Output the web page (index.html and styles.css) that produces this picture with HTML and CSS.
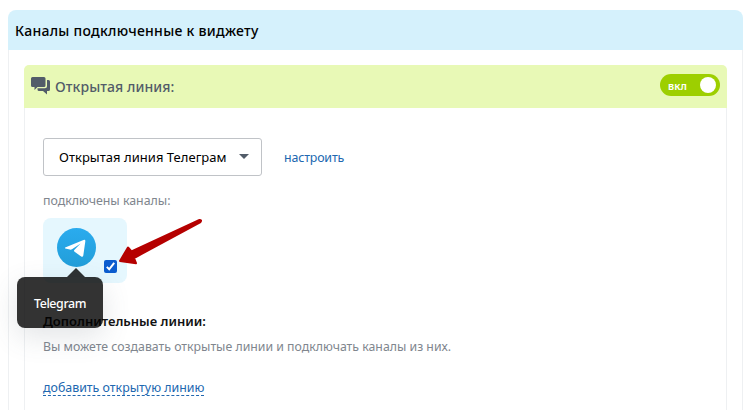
FILE: index.html
```html
<!DOCTYPE html>
<html lang="ru">
<head>
<meta charset="utf-8">
<title>Каналы</title>
<link rel="stylesheet" href="styles.css">
</head>
<body>
<section class="panel">
  <header class="panel-head"><span class="panel-title">Каналы подключенные к виджету</span></header>
  <div class="panel-body">
    <section class="line">
      <header class="line-head">
        <svg class="chat" viewBox="0 0 20 18" width="20" height="18"><path d="M1.500 0H13Q14.500 0 14.500 1.500V8.500Q14.500 10 13 10H6.500L3.500 13V10H1.500Q0 10 0 8.500V1.500Q0 0 1.500 0Z"/><path d="M16 3H17.500Q19 3 19 4.500V12.500Q19 14 17.500 14H16V17.500L12 14H8Q6.500 14 6.500 12.500V11.300H14Q16 11.300 16 9.300Z"/></svg>
        <span class="line-title">Открытая линия:</span>
        <div class="toggle"><span class="toggle-text">вкл</span><span class="knob"></span></div>
      </header>
      <div class="line-body">
        <div class="row">
          <div class="select"><span class="select-text">Открытая линия Телеграм</span><span class="caret"></span></div>
          <a class="link setup">настроить</a>
        </div>
        <div class="label"><span class="label-text">подключены каналы:</span></div>
        <div class="channel">
          <svg class="telegram" viewBox="0 0 39 39" width="39" height="39"><defs><linearGradient id="tg" x1="0" y1="0" x2="0" y2="1"><stop offset="0" stop-color="#2aabee"/><stop offset="1" stop-color="#229ed9"/></linearGradient></defs><circle cx="19.500" cy="19.500" r="19.500" fill="url(#tg)"/><path fill="#fff" d="M8.200 19.500L26.500 12Q28.600 11.300 28.300 13.400L26.300 27.600Q25.800 29.500 24.200 28.500L17.600 23.800Q16.400 22.800 17.500 21.700L23.600 15.600L15 21.300Q14 21.900 12.800 21.600L8.300 20.400Q7.600 20 8.200 19.500Z"/></svg>
          <span class="check"><svg viewBox="0 0 13 13" width="13" height="13"><path d="M2.800 6.900L5.200 9.300L10.200 2.900" fill="none" stroke="#fff" stroke-width="2"/></svg></span>
          <div class="tooltip"><span class="tooltip-text">Telegram</span></div>
          <svg class="pointer" viewBox="0 0 88 50" width="88" height="50"><path d="M3 43L11 29.500L14.500 33.500L82.500 2Q85 2 83.500 4L17 40L19 45.200Z" fill="#b50000" stroke="#b50000" stroke-width="2" stroke-linejoin="round"/></svg>
        </div>
        <h3 class="extra"><span class="extra-text">Дополнительные линии:</span></h3>
        <p class="hint"><span class="hint-text">Вы можете создавать открытые линии и подключать каналы из них.</span></p>
        <a class="link add">добавить открытую линию</a>
      </div>
    </section>
  </div>
</section>
</body>
</html>
```
FILE: styles.css
```css
* { box-sizing: border-box; }
body { margin: 0; height: 410px; overflow: hidden; background: #fff; font: 13px/18px "Noto Sans", "Open Sans", sans-serif; color: #000; }
.panel { margin: 10px 7px 0 8px; }
.panel-head { height: 40px; padding: 2px 7px 0; display: flex; align-items: center; background: #d5f1fc; border-radius: 8px 8px 0 0; font-size: 14px; font-weight: 500; letter-spacing: .28px; }
.panel-body { height: 370px; padding: 15px 15px 0; border: solid #eef0f2; border-width: 0 1px; }
.line-head { height: 43px; padding: 0 7px; display: flex; align-items: center; background: #e8f9b6; border-radius: 5px 5px 0 0; color: #525c69; font-size: 14px; font-weight: 500; letter-spacing: .08px; }
.chat { fill: #525c69; margin: -1px 4px 0 0; }
.toggle { margin: -3px 0 0 auto; width: 60px; height: 22px; padding: 0 4px 0 8px; display: flex; align-items: center; justify-content: space-between; border-radius: 11px; background: #9dcf00; color: #fff; font-size: 10.5px; font-weight: 600; }
.toggle-text { padding-top: 2px; }
.knob { width: 16px; height: 16px; border-radius: 50%; background: #fff; }
.line-body { height: 320px; padding: 30px 18px 0; border: solid #eef0f2; border-width: 0 1px; }
.row { display: flex; align-items: center; }
.select { width: 219px; height: 38px; padding: 0 12px 0 15px; display: flex; align-items: center; justify-content: space-between; border: 1px solid #c0c3c7; border-radius: 3px; letter-spacing: .03px; }
.caret { margin-top: -2px; border: solid transparent; border-width: 5px 5px 0; border-top-color: #525c69; }
.link { color: #2067b0; font-size: 12.4px; }
.setup { margin-left: 22px; padding-top: 2px; letter-spacing: -.15px; }
.label { margin-top: 16px; color: #80868e; font-size: 12.4px; letter-spacing: -.03px; }
.channel { position: relative; width: 84px; height: 65px; margin-top: 8px; padding: 10px 10px 10px 14px; display: flex; justify-content: space-between; align-items: flex-start; border-radius: 8px; background: #e5f7fe; }
.telegram { display: block; }
.check { width: 13px; height: 13px; margin-top: 32px; border-radius: 2px; background: #0b5ccf; }
.check svg { display: block; }
.tooltip { position: absolute; left: -26px; top: 59px; width: 86px; height: 51px; padding-top: 2px; display: flex; align-items: center; justify-content: center; border-radius: 8px; background: rgba(0,0,0,.8); color: #fff; box-shadow: 0 9px 28px rgba(83,92,105,.16); font-size: 12.4px; font-weight: 500; letter-spacing: -.38px; }
.tooltip::before { content: ""; position: absolute; left: 50px; top: -9px; border: solid transparent; border-width: 0 9px 9px; border-bottom-color: rgba(0,0,0,.8); }
.pointer { position: absolute; left: 74px; top: 0; }
.extra { margin: 29px 0 0; font-size: 13px; line-height: 18px; font-weight: 600; color: #111; }
.hint { margin: 8px 0 0; color: #80868e; font-size: 12.3px; }
.add { display: block; width: fit-content; margin-top: 25px; line-height: 14px; border-bottom: 1px dashed #2067b0; }
```
